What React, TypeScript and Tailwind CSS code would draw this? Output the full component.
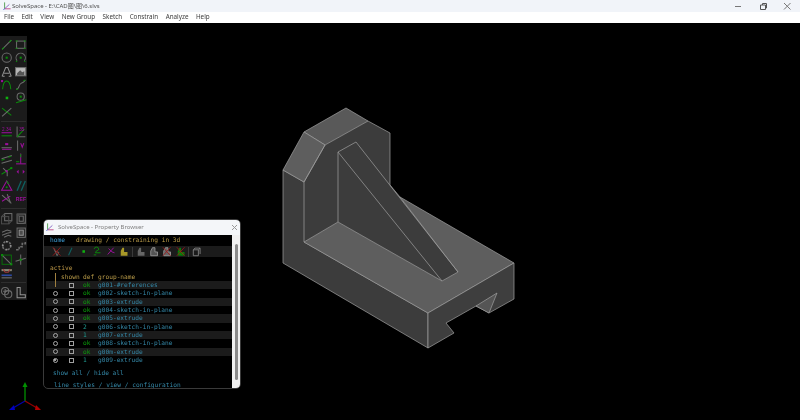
import React from "react";

const G = "#0a8c0a";
const M = "#9c109c";
const A = "#6c6c6c";
const L = "#929292";

const Ic = ({ children }: { children?: React.ReactNode }) => (
  <svg viewBox="0 0 13 13" className="w-[13.4px] h-[13.4px] block" fill="none" strokeWidth="1">
    {children}
  </svg>
);

const tools1: React.ReactNode[] = [
  <><path d="M2 11L11 2" stroke={A} /><path d="M2 11L4 9M9 4L11 2" stroke={G} /></>,
  <><rect x="2.500" y="3" width="8" height="7" stroke={A} /><path d="M1.500 3h2M9.500 3h2M1.500 10h2M9.500 10h2" stroke={G} /></>,
  <><circle cx="6.500" cy="6.500" r="4.500" stroke={A} /><rect x="5.500" y="5.500" width="2" height="2" fill={G} /></>,
  <><path d="M3 9.500A4.500 4.500 0 1 1 10 9.500" stroke={A} /><rect x="5.500" y="5.500" width="2" height="2" fill={G} /><path d="M3 9.500l-1 1M10 9.500l1 1" stroke={G} /></>,
  <><path d="M2 11L5.500 2.500h2L11 11M4 8h5M4.500 11h-2M10.500 11h-2" stroke={L} /></>,
  <><rect x="1.500" y="2.500" width="10" height="8" fill="#b8b8b8" stroke={A} /><path d="M3 8l3-3 2 2 2-1v4H3z" fill="#555" /></>,
  <><path d="M2.500 11C3 5 4.500 3 6.500 3S10 5 10.500 11" stroke={G} /><rect x="1" y="2" width="2" height="2" fill={M} /></>,
  <><path d="M2 11C6 11 4 6 7 5S10 3 11 2" stroke={A} /><path d="M2 11h2M9 3l2-1" stroke={G} /></>,
  <rect x="5.500" y="5.500" width="2.500" height="2.500" fill="#10b010" />,
  <><circle cx="6.500" cy="5.500" r="3.500" stroke={A} /><rect x="5.500" y="4.500" width="2" height="2" fill={G} /><path d="M2 11.500l10-3" stroke={G} /></>,
  <><path d="M2 3l9 7" stroke={G} /><path d="M2 11L11 3" stroke={A} /></>,
  null,
];
const tools2: React.ReactNode[] = [
  <><text x="2" y="5.500" fontSize="4.500" fill={M} fontFamily="Liberation Sans">2.34</text><path d="M1.500 7.500h10" stroke={M} /><path d="M1.500 10.500h10" stroke={G} /></>,
  <><path d="M3 1.500V11.500H11" stroke={A} /><path d="M3 11.500L10 4" stroke={G} /><text x="5" y="5.500" fontSize="4.500" fill={M} fontFamily="Liberation Sans">35</text></>,
  <><path d="M1.500 8.500h10" stroke={A} /><path d="M5 5h3" stroke={M} strokeWidth="2" /><path d="M2 10h9" stroke={M} /></>,
  <><path d="M3.500 1.500v10" stroke={A} /><path d="M6.500 4l1.500 4 1.500-4" stroke={M} /></>,
  <><path d="M1.500 6.500L11.500 3.500M1.500 11L11.500 8" stroke={A} /><path d="M1.500 8l3-1M8 5l3-1" stroke={G} /></>,
  <><path d="M2 11.500h9.500" stroke={M} /><path d="M6.500 1.500v10" stroke={M} /><path d="M2 9.500h3M6.500 2v3" stroke={G} /></>,
  <><path d="M1.500 9L11 3" stroke={G} /><path d="M3 3l4 4 0 4" stroke={A} /><rect x="5.500" y="5" width="2" height="2" fill={M} /><rect x="10" y="2" width="2" height="2" fill={G} /></>,
  <><path d="M2.500 6.500l2-2v4zM10.500 6.500l-2-2v4z" fill={M} /></>,
  <><path d="M6.500 2L11.500 11H1.500z" stroke={M} /><circle cx="6.500" cy="8" r="1" fill={G} /><path d="M6.500 2l2 3" stroke={G} /></>,
  <><path d="M3 11.500L7 2M7 11.500L11 2" stroke="#0f6060" strokeWidth="1.300" /></>,
  <><path d="M2 3l9 8" stroke={A} /><path d="M2 9l8-5" stroke={M} /><path d="M7 2l3 8" stroke={A} /></>,
  <text x="1.800" y="8.500" fontSize="5" fontWeight="700" fill={M} fontFamily="Liberation Sans">REF</text>,
];
const tools3: React.ReactNode[] = [
  <><rect x="4.500" y="1.500" width="7" height="7" stroke={A} /><rect x="1.500" y="4.500" width="7" height="7" stroke="#4c4c4c" /><path d="M1.500 4.500l3-3M8.500 11.500l3-3" stroke="#4c4c4c" /></>,
  <><rect x="3" y="2" width="8" height="9" stroke={A} /><rect x="5" y="4" width="4" height="5" stroke={A} /><path d="M3 2l2 2M11 11l-2-2" stroke="#4c4c4c" /></>,
  <><path d="M2 9l5-2 4-1M2 6l5-2 4 1M4 11l4-2 3 1" stroke={A} /></>,
  <><rect x="3" y="2" width="8" height="9" stroke={A} /><rect x="5" y="4" width="4" height="5" fill="#4c4c4c" stroke={L} /></>,
  <><circle cx="6.500" cy="6.500" r="4" stroke={A} strokeWidth="1.500" strokeDasharray="2 1" /><path d="M2 6.500h1.500M9.500 6.500H11M6.500 2v1.500M6.500 9.500V11" stroke={L} strokeWidth="1.500" /></>,
  <><path d="M2 10.500h3v-3h3v-3h3v-2" stroke={A} strokeWidth="1.500" strokeDasharray="2.500 1" /></>,
  <><rect x="2" y="2" width="9" height="9" stroke="#0a6a0a" /><path d="M2 2l9 9" stroke={A} /><rect x="1" y="1" width="2" height="2" fill={G} /><rect x="10" y="10" width="2" height="2" fill={G} /></>,
  <><path d="M6.500 1.500v10" stroke={A} /><path d="M1.500 8l10-3" stroke={A} /><rect x="5.500" y="5.500" width="2" height="2" fill={G} /></>,
  <><path d="M1.500 3h10v2h-10z" fill="#887" /><path d="M3 3l2 3h3l2-3" stroke="#a03838" /><path d="M1.500 9h10" stroke="#2c48a0" strokeWidth="1.600" /><path d="M1.500 11.500h10" stroke="#777" /></>,
  null,
];
const tools4: React.ReactNode[] = [
  <><circle cx="5" cy="5" r="3.500" stroke={A} /><circle cx="8" cy="8" r="3.500" stroke={A} /><path d="M5 3v4M3 5h4" stroke={A} /></>,
  <path d="M3 1.500h3v7h5v3H3z" stroke={L} />,
];

const Tools = ({ items }: { items: React.ReactNode[] }) => (
  <div className="grid grid-cols-2 w-[27px]">
    {items.map((n, i) => (
      <Ic key={i}>{n}</Ic>
    ))}
  </div>
);

const Sep = () => <div className="h-px bg-[#2e2e2e] mx-[1px] my-[3px]" />;

const PI = ({ children, cross }: { children?: React.ReactNode; cross?: boolean }) => (
  <svg viewBox="0 0 13 13" className="w-[13.4px] h-[11px] block shrink-0" fill="none" strokeWidth="1">
    {children}
    {cross ? <path d="M2 1.500L11 11.500M2 11.500L11 1.500" stroke="#a01818" /> : null}
  </svg>
);

const ext = (c: string) => <path d="M3 11.500V6l2-4h2v5h4v4.500z" fill={c} />;

const groups = [
  ["g001-#references", "ok", false],
  ["g002-sketch-in-plane", "ok", true],
  ["g003-extrude", "ok", true],
  ["g004-sketch-in-plane", "ok", true],
  ["g005-extrude", "ok", true],
  ["g006-sketch-in-plane", "2", true],
  ["g007-extrude", "1", true],
  ["g008-sketch-in-plane", "ok", true],
  ["g00m-extrude", "ok", true],
  ["g009-extrude", "1", true],
] as const;

const Logo = () => (
  <svg viewBox="0 0 10 10" className="w-[8px] h-[8px] block shrink-0" fill="none" strokeWidth="1.100">
    <path d="M2 0.500V8.500" stroke="#4a9a4a" />
    <path d="M2 8.500H9.500" stroke="#c04080" />
    <path d="M2 8.500L8 3" stroke="#8060c0" />
    <path d="M0.500 9.500L2 8.500" stroke="#4060d0" />
  </svg>
);

export default function App() {
  return (
    <div
      className="w-[800px] h-[420px] overflow-hidden flex flex-col bg-black relative blur-[0.4px]"
      style={{ fontFamily: "'Noto Sans', 'Noto Sans CJK SC', sans-serif" }}
    >
      <div className="h-[12px] bg-[#f1f4f9] flex items-center shrink-0 pl-[3px] text-[#505050] text-[6px] gap-[1px]">
        <Logo />
        <span className="whitespace-nowrap leading-none">SolveSpace - E:\CAD图\图\6.slvs</span>
        <div className="ml-auto flex items-center gap-[15.500px] pr-[8px]">
          <svg viewBox="0 0 9 9" className="w-[9px] h-[9px]" fill="none" stroke="#777"><path d="M0 4.500H6" transform="translate(1 0)" /></svg>
          <svg viewBox="0 0 9 9" className="w-[9px] h-[9px]" fill="none" stroke="#555"><path d="M1.500 3h5v4.500h-5zM3.500 3V1.500h4v4.500h-1" /></svg>
          <svg viewBox="0 0 9 9" className="w-[9px] h-[9px]" fill="none" stroke="#777"><path d="M1 1l6.500 6.500M7.500 1L1 7.500" /></svg>
        </div>
      </div>
      <div className="h-[10.500px] bg-white flex items-center shrink-0 pl-[4px] gap-[7.500px] text-[6.300px] text-[#3c3c3c] leading-none whitespace-nowrap">
        <span>File</span>
        <span>Edit</span>
        <span>View</span>
        <span>New Group</span>
        <span>Sketch</span>
        <span>Constrain</span>
        <span>Analyze</span>
        <span>Help</span>
      </div>

      <div className="flex-1 relative bg-black">
        <svg viewBox="0 23 800 397" className="absolute left-0 top-0 w-[800px] h-[397px]" strokeLinejoin="round">
          <path d="M325 145L368 121L390 133V185L400 197L458 272L442 281L338 222L304 242V182Z" fill="#3c3c3c" />
          <g stroke="#a0a0a0" strokeWidth="0.700">
            <path d="M283 170L304 182V242L428 313V348L283 263Z" fill="#3c3c3c" />
            <path d="M346 108L368 121L325 145L304 132Z" fill="#595959" />
            <path d="M304 132L325 145L304 182L283 170Z" fill="#5e5e5e" />
            <path d="M304 242L338 222L442 281L458 272L400 197L514 263L428 313Z" fill="#5e5e5e" />
            <path d="M304 182L325 145M338 152V222M338 152L356 142L458 272M338 152L442 281M368 121L390 133V185L400 197" fill="none" />
            <path d="M428 313L514 263V299L489 313L476 306L446 323L454 333L428 348Z" fill="#3e3e3e" />
            <path d="M476 306L497 293L489 313Z" fill="#555555" />
          </g>
          <g fill="none" strokeWidth="1.300">
            <path d="M25 401V386" stroke="#009000" />
            <path d="M22.500 387L25 382L27.500 387Z" fill="#009000" stroke="none" />
            <path d="M25 401L13 408" stroke="#0000a8" />
            <path d="M9 410L14 405L15 410Z" fill="#0000c0" stroke="none" />
            <path d="M25 401L37 408" stroke="#900000" />
            <path d="M41 410L36 405L35 410Z" fill="#b00000" stroke="none" />
          </g>
        </svg>

        <div className="absolute left-0 top-[13px] w-[27px] h-[264px] bg-[#1b1b1b] pt-[2.300px]">
          <Tools items={tools1} />
          <Sep />
          <Tools items={tools2} />
          <Sep />
          <Tools items={tools3} />
          <Sep />
          <Tools items={tools4} />
        </div>

        <div className="absolute left-[43px] top-[196px] w-[198px] h-[170px] rounded-[5px] overflow-hidden flex flex-col border border-[#3a3a3a] bg-black">
          <div className="h-[15px] bg-[#f4f6f9] flex items-center shrink-0 pl-[2px] pr-[2px] gap-[4px] text-[6px] text-[#808080] leading-none">
            <Logo />
            <span className="whitespace-nowrap">SolveSpace - Property Browser</span>
            <svg viewBox="0 0 7 7" className="ml-auto w-[7px] h-[7px]" fill="none" stroke="#999"><path d="M1 1l5 5M6 1l-5 5" /></svg>
          </div>
          <div className="flex-1 flex min-h-0">
            <div
              className="flex-1 flex flex-col pt-[1px] text-[6.200px] whitespace-pre min-w-0"
              style={{ fontFamily: "'DejaVu Sans Mono', monospace" }}
            >
              <div className="h-[8.330px] leading-[8.330px] pl-[6px] flex">
                <span className="text-[#3f9fd8] w-[26px]">home</span>
                <span className="text-[#b89a48]">drawing / constraining in 3d</span>
              </div>
              <div className="h-[11px] mt-[2.500px] bg-[#1b1b1b] flex items-center pl-[6.300px]">
                <PI cross><path d="M3 2.500l4 9 2-4-4-1" stroke="#777" /></PI>
                <PI><path d="M4 11l4-9" stroke="#0f6060" strokeWidth="1.300" /></PI>
                <PI><rect x="5" y="5" width="3" height="3" fill="#10b010" /></PI>
                <PI><path d="M3.500 3.500a2.800 2.800 0 0 1 5.500 0c0 2.500-4 1.500-4 4.500h6M3 10.500h3" stroke={G} strokeWidth="1.100" /></PI>
                <PI><path d="M3 10L10 2M4 3l4 4 3 1" stroke={M} strokeWidth="1.100" /></PI>
                <PI>{ext("#a89828")}</PI>
                <div className="w-[1px] h-[10px] bg-[#3a3a3a] mx-[1px]" />
                <PI>{ext("#666")}</PI>
                <PI><path d="M3 11.500V6l2-4h3v5h3v4.500z" stroke="#999" fill="#555" /></PI>
                <PI cross><path d="M3 11.500V6l2-4h3v5h3v4.500z" stroke="#999" fill="#666" /></PI>
                <PI cross>{ext("#0a7a0a")}</PI>
                <div className="w-[1px] h-[10px] bg-[#3a3a3a] mx-[1px]" />
                <PI><path d="M4.500 2.500h6v7M2.500 4.500h6v7h-6zM2.500 4.500l2-2M8.500 4.500l2-2" stroke="#888" /></PI>
              </div>
              <div className="h-[8.330px] leading-[8.330px] mt-[7px] pl-[6px] text-[#c09a48]">active</div>
              <div className="h-[8.330px] leading-[8.330px] text-[#b89a48] flex relative">
                <span className="absolute left-[10.500px] top-0 w-[1px] h-[14px] bg-[#a08040]" />
                <span className="pl-[17px] w-[39px]">shown</span>
                <span className="w-[15px]">def</span>
                <span>group-name</span>
              </div>
              {groups.map(([name, def, radio], i) => (
                <div
                  key={name}
                  className={
                    "h-[8.330px] leading-[8.330px] flex items-center ml-[2px] " +
                    (i % 2 === 0 ? "bg-[#1b1b1b]" : "bg-black")
                  }
                >
                  <span className="w-[13.500px] shrink-0 flex justify-end pr-[2px]">
                    {radio ? (
                      <span className="w-[5px] h-[5px] rounded-full border border-[#a8a8a8] flex items-center justify-center">
                        {i === 9 ? <span className="w-[2px] h-[2px] rounded-full bg-[#d0d0d0]" /> : null}
                      </span>
                    ) : null}
                  </span>
                  <span className="w-[23.500px] shrink-0 pl-[9px] flex">
                    <span className="w-[5px] h-[5px] border border-[#a0a0a0] block" />
                  </span>
                  <span className={"w-[15px] shrink-0 " + (def === "ok" ? "text-[#0aa00a]" : "text-[#1f9a90]")}>{def}</span>
                  <span className="text-[#3488a8]">{name}</span>
                </div>
              ))}
              <div className="h-[8.330px] leading-[8.330px] mt-[4.300px] pl-[9px] text-[#3488a8]">show all / hide all</div>
              <div className="h-[8.330px] leading-[8.330px] mt-[4px] pl-[10px] text-[#3488a8]">line styles / view / configuration</div>
            </div>
            <div className="w-[8px] shrink-0 bg-[#f0f0f0] flex justify-center pt-[9px]">
              <div className="w-[3px] h-[136px] bg-[#8a8a8a] rounded-full" />
            </div>
          </div>
        </div>
      </div>
    </div>
  );
}
